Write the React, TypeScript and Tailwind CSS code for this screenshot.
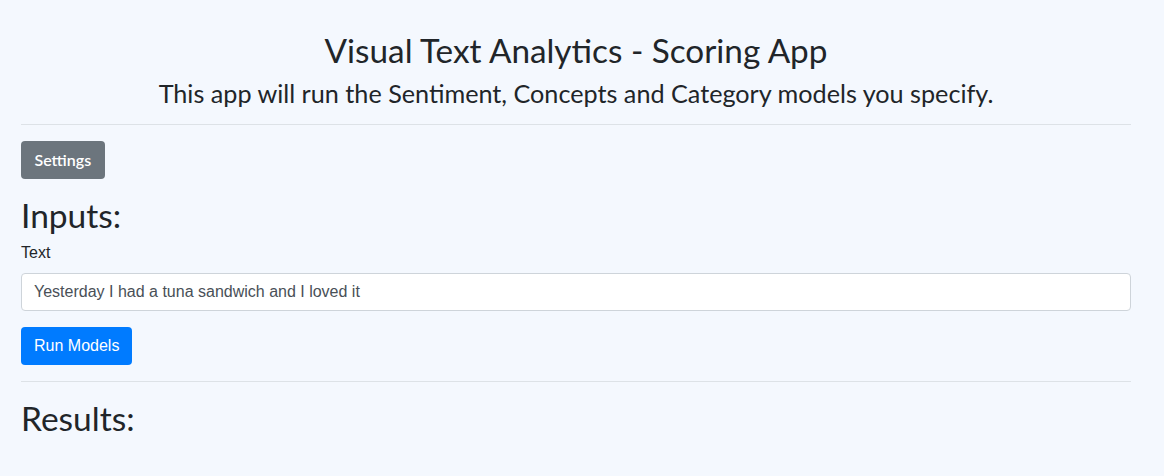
export default function App() {
  return (
    <div className="min-h-[476px] w-full bg-[#f4f8fe] text-[#212529] font-['Liberation_Sans',Arial,sans-serif]">
      <div className="ml-[21px] w-[1110px] pt-[31px]">
        <div className="text-center font-['Lato','Noto_Sans',sans-serif]">
          <h2 className="text-[33.3px] leading-[1.2] font-normal">Visual Text Analytics - Scoring App</h2>
          <h4 className="mt-[7px] text-[25.2px] leading-[1.2] font-normal">
            This app will run the Sentiment, Concepts and Category models you specify.
          </h4>
        </div>
        <hr className="mt-[16px] border-t border-[#dde2e7]" />
        <button className="mt-[16px] h-[38px] px-[13.5px] rounded-[4px] bg-[#6c757d] text-white text-[16px] font-semibold font-['Lato','Noto_Sans',sans-serif]">
          Settings
        </button>
        <h2 className="mt-[16px] text-[33.5px] leading-[1.2] font-['Lato','Noto_Sans',sans-serif]">Inputs:</h2>
        <label className="mt-[6px] block text-[16px] leading-[24px]">Text</label>
        <input
          className="mt-[8px] block w-full h-[38px] px-[12px] rounded-[4px] border border-[#ced4da] bg-white text-[16px] text-[#495057] outline-none"
          defaultValue="Yesterday I had a tuna sandwich and I loved it"
        />
        <button className="mt-[16px] h-[38px] px-[13px] rounded-[4px] bg-[#007bff] text-white text-[16px]">
          Run Models
        </button>
        <hr className="mt-[16px] border-t border-[#dde2e7]" />
        <h2 className="mt-[16px] text-[33.5px] leading-[1.2] font-['Lato','Noto_Sans',sans-serif]">Results:</h2>
      </div>
    </div>
  );
}
